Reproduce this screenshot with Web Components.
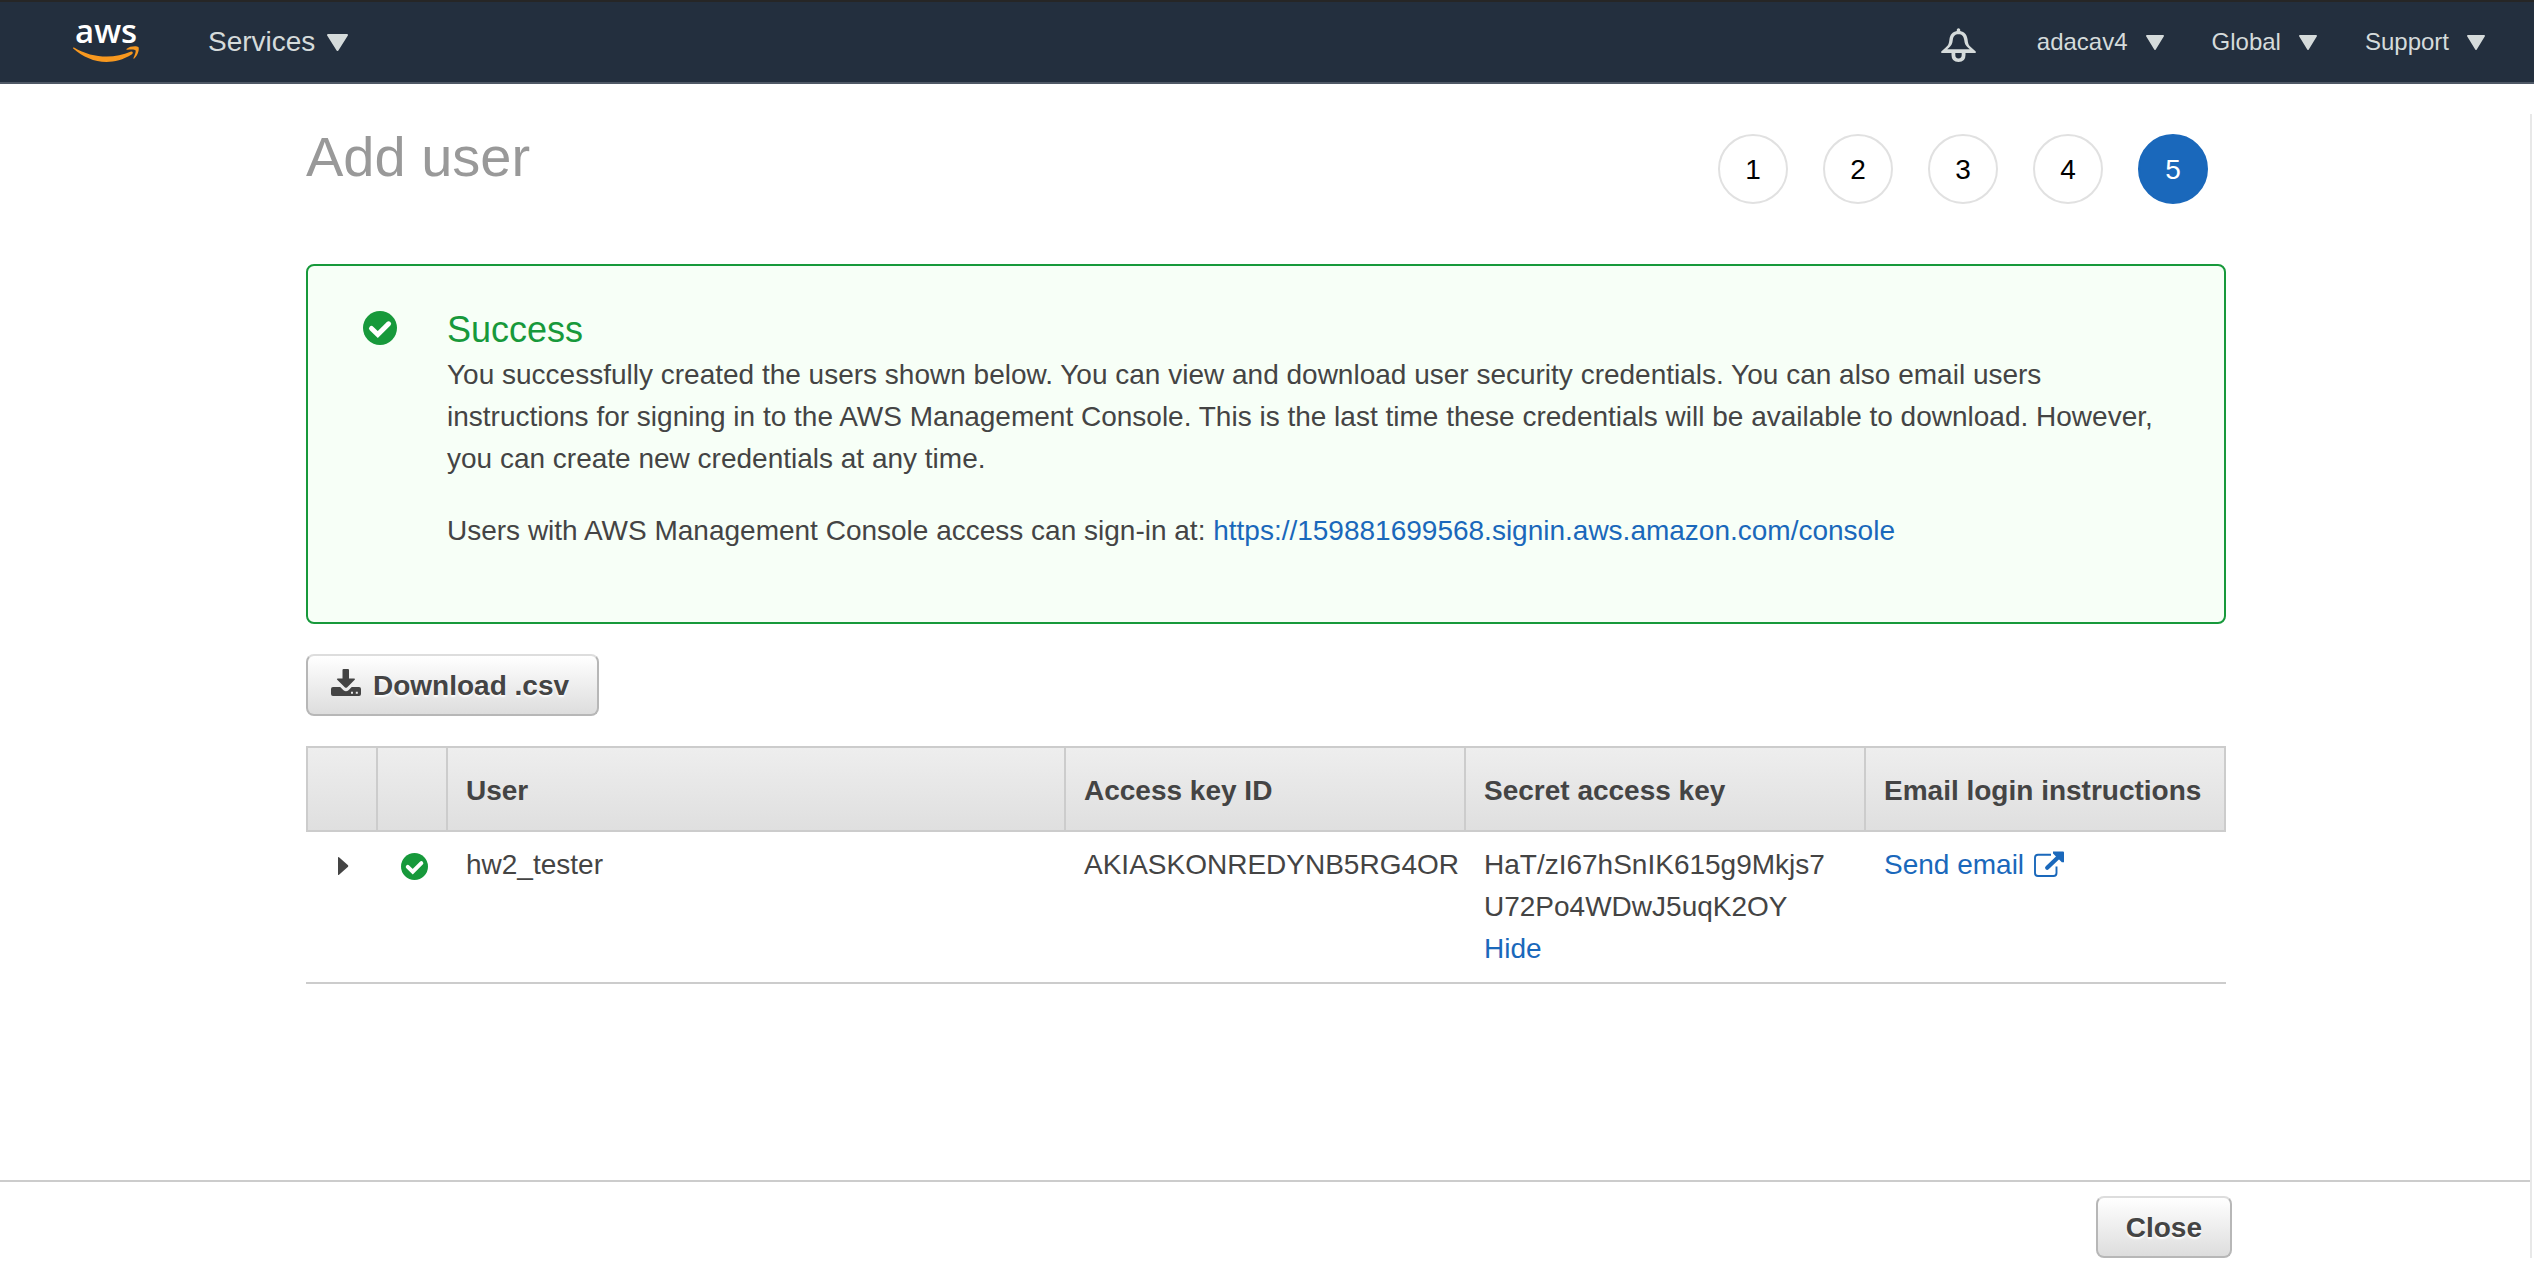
<!DOCTYPE html>
<html lang="en">
<head>
<meta charset="utf-8">
<title>Add user</title>
<style>
  body {
    margin: 0;
    background: #fff;
    color: #444;
    font: 28px/42px "Liberation Sans", Arial, sans-serif;
  }
</style>
</head>
<body>
<iam-page>
  <console-nav slot="nav">
    <nav-menu size="large">Services</nav-menu>
    <nav-menu slot="end">adacav4</nav-menu>
    <nav-menu slot="end">Global</nav-menu>
    <nav-menu slot="end">Support</nav-menu>
  </console-nav>

  <wizard-header heading="Add user" steps="5" current="5"></wizard-header>

  <success-alert heading="Success" href="https://159881699568.signin.aws.amazon.com/console">
    You successfully created the users shown below. You can view and download user security credentials. You can also email users instructions for signing in to the AWS Management Console. This is the last time these credentials will be available to download. However, you can create new credentials at any time.
    <span slot="signin">Users with AWS Management Console access can sign-in at:</span>
  </success-alert>

  <console-button icon="download">Download .csv</console-button>

  <credentials-table></credentials-table>

  <console-button slot="footer">Close</console-button>
</iam-page>

<script>
  const define = (name, html, setup) => {
    const template = document.createElement('template');
    template.innerHTML = html;
    customElements.define(name, class extends HTMLElement {
      constructor() {
        super();
        this.attachShadow({ mode: 'open' }).append(template.content.cloneNode(true));
      }
      connectedCallback() {
        if (setup) setup(this, this.shadowRoot);
      }
    });
  };

  define('iam-page', `
    <style>
      :host { display: flex; flex-direction: column; min-height: 100vh; }
      .body { flex: 1; display: flex; }
      .content { flex: 1; min-width: 0; display: flex; flex-direction: column; }
      .rail { width: 2px; margin: 30px 2px 8px -2px; background: #e8e8e8; }
      main {
        flex: 1;
        display: flex;
        flex-direction: column;
        align-items: stretch;
        gap: 30px;
        width: 100%;
        max-width: 1920px;
        box-sizing: border-box;
        margin: 0 auto;
        padding: 40px 0 30px;
      }
      footer {
        border-top: 2px solid #ccc;
        padding: 14px 0 8px;
        background: #fff;
      }
      .actions {
        display: flex;
        justify-content: flex-end;
        max-width: 1932px;
        margin: 0 auto;
      }
    </style>
    <slot name="nav"></slot>
    <div class="body">
      <div class="content">
        <main><slot></slot></main>
        <footer><div class="actions"><slot name="footer"></slot></div></footer>
      </div>
      <div class="rail"></div>
    </div>`);

  define('console-nav', `
    <style>
      :host {
        display: block;
        border-top: 2px solid #262626;
        border-bottom: 2px solid #4f5966;
        background: #232f3e;
        color: #d5dbdb;
      }
      nav {
        display: flex;
        align-items: center;
        height: 80px;
        padding: 0 49px 0 72px;
      }
      a { display: flex; margin-right: 64px; }
      .end { display: flex; align-items: center; gap: 48px; margin-left: auto; }
      button { border: 0; padding: 6px 0 0; background: none; color: inherit; display: flex; margin-right: 12px; }
    </style>
    <nav>
      <a href="#" aria-label="aws home">
        <svg width="72" height="76" viewBox="0 -15 72 76">
          <text x="3" y="24" font-family="Open Sans, sans-serif" font-weight="600" font-size="33" fill="#fff">aws</text>
          <g fill="#f7981f" transform="translate(0 -2)">
            <path d="M2 30.500C20 41.500 42 42 58.500 34.800C60.500 34 61.800 36 60 37.300C51 43 42.500 45 34.500 45C22 45 11 40 1.200 31.600C.6 31 1.200 30.100 2 30.500Z"/>
            <path d="M54.700 31.700C57.500 29.200 64.500 28.600 66.400 30C67.500 31.500 66.300 38 62.300 41.500C61.700 42 61.200 41.800 61.500 41.100C62.600 38.500 64.200 34.500 63.500 33.200C62.500 32 58 32.500 55.300 32.700C54.400 32.800 54.100 32.300 54.700 31.700Z"/>
          </g>
        </svg>
      </a>
      <slot></slot>
      <div class="end">
        <button type="button" aria-label="Notifications">
          <svg width="36" height="36" viewBox="0 0 36 36" fill="#d5dbdb" fill-rule="evenodd">
            <path d="M15.800 2.500Q17.500 .2 19.200 2.500V4C23.500 4.800 26 7.500 26.600 12.500C27 17 28 18.500 30 20.200L34.500 24.200Q35.600 25.800 34 26H1Q-.6 25.800 .5 24.200L5 20.200C7 18.500 8 17 8.400 12.500C9 7.500 11.500 4.800 15.800 4ZM17.500 7.200C14 7.200 12.300 9 11.800 13C11.400 17 10.300 18.600 8.200 20.500L6.200 22.200H28.800L26.800 20.500C24.700 18.600 23.600 17 23.200 13C22.700 9 21 7.200 17.500 7.200Z"/>
            <path d="M10.500 25H14.300V28Q14.300 31.400 17.500 31.400T20.700 28V25H24.500V28Q24.500 35 17.500 35T10.500 28Z"/>
          </svg>
        </button>
        <slot name="end"></slot>
      </div>
    </nav>`);

  define('nav-menu', `
    <style>
      :host { display: block; }
      button {
        display: flex;
        align-items: center;
        gap: 18px;
        border: 0;
        padding: 0;
        background: none;
        color: inherit;
        font: 24px/42px "Liberation Sans", Arial, sans-serif;
      }
      svg { width: 18px; height: 15px; }
      :host([size="large"]) button { font-size: 28px; gap: 12px; }
      :host([size="large"]) svg { width: 21px; height: 17px; }
    </style>
    <button type="button" aria-haspopup="true">
      <slot></slot>
      <svg viewBox="0 0 20 17" preserveAspectRatio="none" fill="currentColor" stroke="currentColor" stroke-width="2" stroke-linejoin="round">
        <path d="M1 1H19L10 16Z"/>
      </svg>
    </button>`);

  define('wizard-header', `
    <style>
      :host { display: flex; justify-content: space-between; align-items: flex-start; padding-bottom: 30px; }
      h1 { margin: 0; font-size: 56px; line-height: 66px; font-weight: 400; color: #999; }
      ol { display: flex; gap: 35px; list-style: none; margin: 0; padding: 10px 18px 0 0; }
      li {
        display: flex;
        align-items: center;
        justify-content: center;
        box-sizing: border-box;
        width: 70px;
        height: 70px;
        padding-top: 2px;
        border: 2px solid #e1e1e1;
        border-radius: 50%;
        color: #000;
      }
      li[aria-current] { border-color: #1a68bb; background: #1a68bb; color: #fff; }
    </style>
    <h1></h1>
    <ol></ol>`, (host, root) => {
      root.querySelector('h1').textContent = host.getAttribute('heading');
      const list = root.querySelector('ol');
      list.textContent = '';
      for (let i = 1; i <= Number(host.getAttribute('steps')); i++) {
        const item = document.createElement('li');
        item.textContent = i;
        if (String(i) === host.getAttribute('current')) item.setAttribute('aria-current', 'step');
        list.append(item);
      }
    });

  define('check-icon', `
    <style>
      :host { display: block; width: 34px; height: 34px; }
      svg { display: block; width: 100%; height: 100%; }
    </style>
    <svg viewBox="0 0 34 34">
      <circle cx="17" cy="17" r="17" fill="#17993b"/>
      <path d="M8.500 17.500L14.800 23.500L25.600 12.800" fill="none" stroke="#fff" stroke-width="5" stroke-linecap="round"/>
    </svg>`);

  define('success-alert', `
    <style>
      :host {
        display: flex;
        gap: 50px;
        border: 2px solid #17993b;
        border-radius: 8px;
        background: #f7fff7;
        padding: 43px 40px 70px 55px;
      }
      check-icon { flex: none; margin-top: 2px; }
      h2 { margin: 0 0 3px; font-size: 36px; line-height: 42px; font-weight: 400; color: #17993b; }
      p { margin: 0; }
      p + p { margin-top: 30px; }
      a { color: #1a68bb; text-decoration: none; }
    </style>
    <check-icon></check-icon>
    <div>
      <h2></h2>
      <p><slot></slot></p>
      <p><slot name="signin"></slot> <a></a></p>
    </div>`, (host, root) => {
      root.querySelector('h2').textContent = host.getAttribute('heading');
      const link = root.querySelector('a');
      link.href = link.textContent = host.getAttribute('href');
    });

  define('console-button', `
    <style>
      :host { display: flex; }
      button {
        display: flex;
        align-items: center;
        height: 62px;
        box-sizing: border-box;
        border: 2px solid #b7b7b7;
        border-top-color: #ddd;
        border-radius: 8px;
        padding: 2px 28px 0;
        background: linear-gradient(#fff, #ddd);
        color: #444;
        font: bold 28px/42px "Liberation Sans", Arial, sans-serif;
        text-shadow: 0 2px 2px #fff;
      }
      svg { display: none; }
      :host([icon="download"]) svg { display: block; margin: 0 12px 8px -5px; }
    </style>
    <button type="button">
      <svg width="30" height="27" viewBox="0 0 30 27" fill="#444">
        <path d="M11.500 1Q11.500 0 12.500 0H17Q18 0 18 1V9.500H23.200Q24.600 9.700 23.700 10.800L16 18.400Q15 19.300 14 18.400L6.200 10.800Q5.300 9.700 6.700 9.500H11.500Z"/>
        <path fill-rule="evenodd" d="M2 18H9.200L12.500 21.200Q15 23.300 17.500 21.200L20.700 18H28Q30 18 30 20V25Q30 27 28 27H2Q0 27 0 25V20Q0 18 2 18ZM20 22.800V24.800H22V22.800ZM24.800 22.800V24.800H26.800V22.800Z"/>
      </svg>
      <slot></slot>
    </button>`);

  define('credentials-table', `
    <style>
      :host { display: block; }
      table { width: 100%; table-layout: fixed; border-collapse: separate; border-spacing: 0; }
      .expand { width: 72px; }
      .status { width: 70px; }
      .key { width: 400px; }
      .email { width: 360px; }
      th, td { box-sizing: border-box; text-align: left; vertical-align: top; white-space: nowrap; }
      th {
        height: 86px;
        padding: 22px 0 18px 18px;
        border: solid #ccc;
        border-width: 2px 2px 2px 0;
        background: linear-gradient(#eee, #dfdfdf);
      }
      th:first-child { border-left-width: 2px; }
      td { padding: 12px 0 12px 18px; border-bottom: 2px solid #ccc; }
      .icon { padding-left: 2px; }
      .icon > * { margin: 0 auto; }
      .icon button { display: flex; align-items: center; height: 42px; border: 0; padding: 2px 0 0; background: none; }
      .icon check-icon { width: 27px; height: 27px; margin-top: 9px; }
      a { color: #1a68bb; text-decoration: none; }
      .send { display: inline-flex; align-items: center; gap: 10px; }
      .send svg { margin-bottom: 2px; }
    </style>
    <table>
      <colgroup><col class="expand"><col class="status"><col><col class="key"><col class="key"><col class="email"></colgroup>
      <thead>
        <tr><th></th><th></th><th>User</th><th>Access key ID</th><th>Secret access key</th><th>Email login instructions</th></tr>
      </thead>
      <tbody>
        <tr>
          <td class="icon">
            <button type="button" aria-label="Expand row">
              <svg width="12" height="20" viewBox="0 0 12 20" fill="#444"><path d="M1 1.500Q1 .5 2 1.200L11 9.300Q11.600 10 11 10.700L2 18.800Q1 19.500 1 18.500Z"/></svg>
            </button>
          </td>
          <td class="icon"><check-icon></check-icon></td>
          <td>hw2_tester</td>
          <td>AKIASKONREDYNB5RG4OR</td>
          <td>HaT/zI67hSnIK615g9Mkjs7<br>U72Po4WDwJ5uqK2OY<br><a href="#">Hide</a></td>
          <td>
            <a class="send" href="#">Send email
              <svg width="30" height="27" viewBox="0 0 30 27">
                <path d="M17 3.700H4Q1 3.700 1 6.700V22Q1 25 4 25H19.500Q22.500 25 22.500 22V15.500" fill="none" stroke="#1a68bb" stroke-width="1.900"/>
                <path d="M13.200 16.800L25 5.500" stroke="#1a68bb" stroke-width="4.200" stroke-linecap="round"/>
                <path d="M19 .5H29Q30 .5 30 1.500V11.300L27.800 11.200L19 2.500Z" fill="#1a68bb"/>
              </svg>
            </a>
          </td>
        </tr>
      </tbody>
    </table>`);
</script>
</body>
</html>
